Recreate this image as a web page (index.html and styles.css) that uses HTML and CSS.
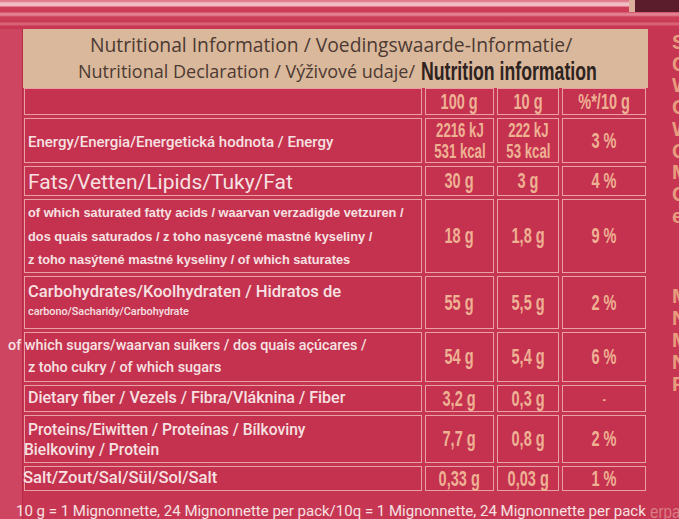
FILE: index.html
```html
<!DOCTYPE html>
<html>
<head>
<meta charset="utf-8">
<link rel="stylesheet" href="styles.css">
</head>
<body>
<div class="page">
  <div class="topstrip"><div class="tr-beige"></div><div class="tr-dark"></div></div>
  <div class="main">
    <div class="leftstrip"></div>
    <div class="panel">
      <div class="head">
        <p class="h1">Nutritional Information / Voedingswaarde-Informatie/</p>
        <p class="h2">Nutritional Declaration / Výživové udaje/ <b class="cond">Nutrition information</b></p>
      </div>
      <div class="grid">
        <div class="c lab"></div>
        <div class="c v"><span class="n">100 g</span></div>
        <div class="c v"><span class="n">10 g</span></div>
        <div class="c v"><span class="n">%*/10 g</span></div>

        <div class="c lab energy">Energy/Energia/Energetická hodnota / Energy</div>
        <div class="c v"><span class="n en">2216 kJ<br>531 kcal</span></div>
        <div class="c v"><span class="n en">222 kJ<br>53 kcal</span></div>
        <div class="c v"><span class="n">3 %</span></div>

        <div class="c lab fats">Fats/Vetten/Lipids/Tuky/Fat</div>
        <div class="c v"><span class="n">30 g</span></div>
        <div class="c v"><span class="n">3 g</span></div>
        <div class="c v"><span class="n">4 %</span></div>

        <div class="c lab sat">of which saturated fatty acids / waarvan verzadigde vetzuren /<br>dos quais saturados / z toho nasycené mastné kyseliny /<br>z toho nasýtené mastné kyseliny / of which saturates</div>
        <div class="c v"><span class="n">18 g</span></div>
        <div class="c v"><span class="n">1,8 g</span></div>
        <div class="c v"><span class="n">9 %</span></div>

        <div class="c lab carb"><span class="big">Carbohydrates/Koolhydraten / Hidratos de</span><span class="small">carbono/Sacharidy/Carbohydrate</span></div>
        <div class="c v"><span class="n">55 g</span></div>
        <div class="c v"><span class="n">5,5 g</span></div>
        <div class="c v"><span class="n">2 %</span></div>

        <div class="c lab sug"><span class="out">of which sugars/waarvan suikers / dos quais açúcares /</span><span>z toho cukry / of which sugars</span></div>
        <div class="c v"><span class="n">54 g</span></div>
        <div class="c v"><span class="n">5,4 g</span></div>
        <div class="c v"><span class="n">6 %</span></div>

        <div class="c lab fib">Dietary fiber / Vezels / Fibra/Vláknina / Fiber</div>
        <div class="c v"><span class="n">3,2 g</span></div>
        <div class="c v"><span class="n">0,3 g</span></div>
        <div class="c v"><span class="n dash">-</span></div>

        <div class="c lab prot"><span>Proteins/Eiwitten / Proteínas / Bílkoviny</span><span class="out2">Bielkoviny / Protein</span></div>
        <div class="c v"><span class="n">7,7 g</span></div>
        <div class="c v"><span class="n">0,8 g</span></div>
        <div class="c v"><span class="n">2 %</span></div>

        <div class="c lab salt"><span class="st">Salt/Zout/Sal/Sül/Sol/Salt</span></div>
        <div class="c v"><span class="n">0,33 g</span></div>
        <div class="c v"><span class="n">0,03 g</span></div>
        <div class="c v"><span class="n">1 %</span></div>
      </div>
      <p class="foot">10 g = 1 Mignonnette, 24 Mignonnette per pack/10q = 1 Mignonnette, 24 Mignonnette per pack</p>
    </div>
    <div class="edge">
      <div class="grp1"><span>S</span><span>C</span><span>W</span><span>C</span><span>W</span><span>C</span><span>M</span><span>C</span><span>e</span></div>
      <div class="grp2"><span>M</span><span>N</span><span>M</span><span>N</span><span>F</span></div>
      <div class="ghost">erpa</div>
    </div>
  </div>
</div>
</body>
</html>
```

FILE: styles.css
```css
* { box-sizing: border-box; }
html, body { margin: 0; padding: 0; }
body {
  width: 679px;
  height: 519px;
  overflow: hidden;
  background: #c63652;
}
.page { width: 679px; height: 519px; overflow: hidden; }
.topstrip {
  height: 29px;
  display: flex;
  justify-content: flex-end;
  background: linear-gradient(to bottom,
    #dc7487 0px, #e68c9b 2px, #f2c0c6 3px, #f0b9c0 6px, #cf3f5a 7px, #cc3b56 12px,
    #e07a8b 13px, #e48594 15px, #cd3d58 17px, #c93a55 22px, #d96579 23px, #d65f74 25px, #c83753 26px, #c63652 29px);
}
.tr-beige { width: 6px; height: 12px; background: #dcae9c; }
.tr-dark { width: 44px; height: 12px; background: #5b1d2b; }

.main { display: flex; height: 490px; }
.leftstrip {
  width: 23px;
  flex: none;
  background: #cd4560;
  border-right: 1px solid #b52c47;
}
.panel { width: 625px; flex: none; }
.head {
  height: 59px;
  background: #dab89b;
  padding-top: 5px;
  font-family: "Open Sans", "Noto Sans", sans-serif;
  color: #4c3a33;
}
.head p { margin: 0; white-space: nowrap; }
.h1 { font-size: 19.3px; line-height: 22px; padding-left: 67px; }
.h2 { font-size: 18px; line-height: 24px; margin-top: 3px !important; padding-left: 55px; }
.cond {
  display: inline-block;
  font-family: "Liberation Sans", Arial, sans-serif;
  font-weight: bold;
  font-size: 26px;
  color: #2e231f;
  transform: scaleX(0.68);
  transform-origin: left center;
  vertical-align: -2px;
  margin-left: 1px;
}

.grid {
  display: grid;
  margin-left: 1px;
  grid-template-columns: 398px 69px 62px 84px;
  grid-template-rows: 27px 45px 30px 74px 53px 50px 27px 48px 25px;
  column-gap: 3px;
  row-gap: 3px;
}
.c {
  border: 1px solid #e9a0a2;
  background: #c4324f;
}
.lab {
  padding-left: 3px;
  color: #f7e1e2;
  font-family: Roboto, "Liberation Sans", sans-serif;
  white-space: nowrap;
}
.v {
  display: flex;
  align-items: center;
  justify-content: center;
}
.n {
  display: inline-block;
  flex: none;
  white-space: nowrap;
  font-family: "Liberation Sans", Arial, sans-serif;
  font-weight: bold;
  font-size: 22px;
  line-height: 22px;
  color: #efb194;
  transform: scaleX(0.66);
  text-align: center;
}
.n.en { font-size: 20px; line-height: 21px; }
.n.dash { font-size: 14px; }

.energy { font-size: 15px; font-weight: 500; line-height: 20px; padding-top: 13px; }
.fats { font-size: 21px; font-weight: 400; line-height: 24px; padding-top: 3px; }
.sat {
  font-family: "Liberation Sans", Arial, sans-serif;
  font-weight: bold;
  font-size: 12.8px;
  line-height: 23.5px;
  padding-top: 1px;
}
.carb { display: flex; flex-direction: column; padding-top: 5px; }
.carb .big { font-size: 16.6px; font-weight: 500; line-height: 20px; }
.carb .small { font-size: 10.8px; font-weight: 500; line-height: 14px; margin-top: 3px; }
.sug { display: flex; flex-direction: column; font-size: 14.4px; font-weight: 500; line-height: 22px; padding-top: 2px; }
.sug .out { margin-left: -20px; }
.fib { font-size: 16px; font-weight: 500; line-height: 24px; }
.prot { display: flex; flex-direction: column; font-size: 15.6px; font-weight: 500; line-height: 20px; padding-top: 4px; }
.prot .out2 { margin-left: -4px; }
.salt { font-size: 16.6px; font-weight: 500; line-height: 22px; padding-left: 0; }
.salt .st { margin-left: -2px; }

.foot {
  margin: 10px 0 0 -7px;
  font-family: Roboto, "Liberation Sans", sans-serif;
  font-size: 15px;
  line-height: 20px;
  color: #f7e1e2;
  white-space: nowrap;
}

.edge {
  width: 31px;
  flex: none;
  padding-left: 24px;
  font-family: "Liberation Sans", Arial, sans-serif;
  font-weight: bold;
  font-size: 20px;
  color: #e89d7e;
  overflow: hidden;
  position: relative;
}
.grp1, .grp2 { display: flex; flex-direction: column; }
.grp1 { margin-top: 3px; line-height: 21.7px; }
.grp2 { margin-top: 58px; line-height: 22px; }
.ghost {
  position: absolute;
  left: 2px;
  top: 472px;
  font-size: 19px;
  font-weight: normal;
  color: #d97d83;
  transform: scaleX(0.8);
  transform-origin: left;
}
```
